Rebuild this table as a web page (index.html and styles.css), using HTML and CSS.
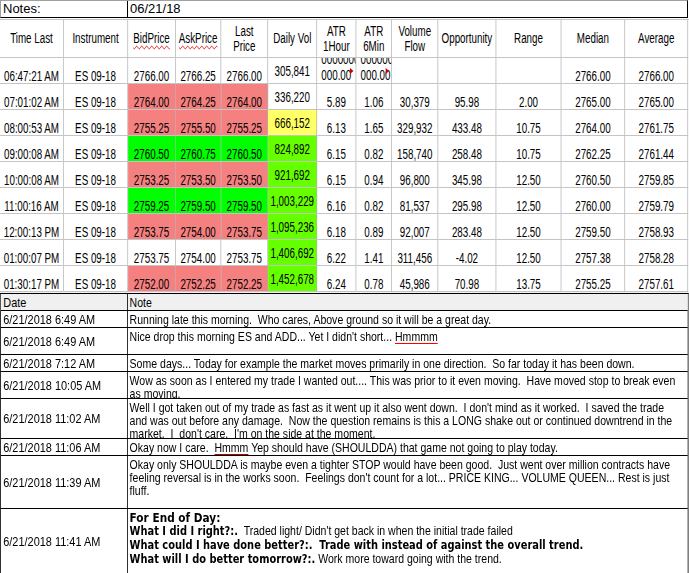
FILE: index.html
```html
<!DOCTYPE html>
<html>
<head>
<meta charset="utf-8">
<link rel="stylesheet" href="styles.css">
</head>
<body>
<div class="notes-bar"><div class="notes-label">Notes:</div><div class="notes-date">06/21/18</div></div>

<div class="grid-scale">
<div class="grid">
<div class="cell head">Time Last</div>
<div class="cell head">Instrument</div>
<div class="cell head"><span class="spell">BidPrice</span></div>
<div class="cell head"><span class="spell">AskPrice</span></div>
<div class="cell head">Last<br>Price</div>
<div class="cell head">Daily Vol</div>
<div class="cell head">ATR<br>1Hour</div>
<div class="cell head">ATR<br>6Min</div>
<div class="cell head">Volume<br>Flow</div>
<div class="cell head">Opportunity</div>
<div class="cell head">Range</div>
<div class="cell head">Median</div>
<div class="cell head">Average</div>

<div class="cell">06:47:21 AM</div>
<div class="cell">ES 09-18</div>
<div class="cell">2766.00</div>
<div class="cell">2766.25</div>
<div class="cell">2766.00</div>
<div class="cell vol">305,841</div>
<div class="cell ovf"><div>0000000</div><div>000.00</div><span class="marker"></span></div>
<div class="cell ovf"><div>0000000</div><div>000.00</div><span class="marker"></span></div>
<div class="cell"></div>
<div class="cell"></div>
<div class="cell"></div>
<div class="cell">2766.00</div>
<div class="cell">2766.00</div>

<div class="cell">07:01:02 AM</div>
<div class="cell">ES 09-18</div>
<div class="cell red">2764.00</div>
<div class="cell red">2764.25</div>
<div class="cell red">2764.00</div>
<div class="cell vol">336,220</div>
<div class="cell">5.89</div>
<div class="cell">1.06</div>
<div class="cell">30,379</div>
<div class="cell">95.98</div>
<div class="cell">2.00</div>
<div class="cell">2765.00</div>
<div class="cell">2765.00</div>

<div class="cell">08:00:53 AM</div>
<div class="cell">ES 09-18</div>
<div class="cell red">2755.25</div>
<div class="cell red">2755.50</div>
<div class="cell red">2755.25</div>
<div class="cell vol yel">666,152</div>
<div class="cell">6.13</div>
<div class="cell">1.65</div>
<div class="cell">329,932</div>
<div class="cell">433.48</div>
<div class="cell">10.75</div>
<div class="cell">2764.00</div>
<div class="cell">2761.75</div>

<div class="cell">09:00:08 AM</div>
<div class="cell">ES 09-18</div>
<div class="cell grn">2760.50</div>
<div class="cell grn">2760.75</div>
<div class="cell grn">2760.50</div>
<div class="cell vol lime">824,892</div>
<div class="cell">6.15</div>
<div class="cell">0.82</div>
<div class="cell">158,740</div>
<div class="cell">258.48</div>
<div class="cell">10.75</div>
<div class="cell">2762.25</div>
<div class="cell">2761.44</div>

<div class="cell">10:00:08 AM</div>
<div class="cell">ES 09-18</div>
<div class="cell red">2753.25</div>
<div class="cell red">2753.50</div>
<div class="cell red">2753.50</div>
<div class="cell vol lime">921,692</div>
<div class="cell">6.15</div>
<div class="cell">0.94</div>
<div class="cell">96,800</div>
<div class="cell">345.98</div>
<div class="cell">12.50</div>
<div class="cell">2760.50</div>
<div class="cell">2759.85</div>

<div class="cell">11:00:16 AM</div>
<div class="cell">ES 09-18</div>
<div class="cell grn">2759.25</div>
<div class="cell grn">2759.50</div>
<div class="cell grn">2759.50</div>
<div class="cell vol lime">1,003,229</div>
<div class="cell">6.16</div>
<div class="cell">0.82</div>
<div class="cell">81,537</div>
<div class="cell">295.98</div>
<div class="cell">12.50</div>
<div class="cell">2760.00</div>
<div class="cell">2759.79</div>

<div class="cell">12:00:13 PM</div>
<div class="cell">ES 09-18</div>
<div class="cell red">2753.75</div>
<div class="cell red">2754.00</div>
<div class="cell red">2753.75</div>
<div class="cell vol lime">1,095,236</div>
<div class="cell">6.18</div>
<div class="cell">0.89</div>
<div class="cell">92,007</div>
<div class="cell">283.48</div>
<div class="cell">12.50</div>
<div class="cell">2759.50</div>
<div class="cell">2758.93</div>

<div class="cell">01:00:07 PM</div>
<div class="cell">ES 09-18</div>
<div class="cell">2753.75</div>
<div class="cell">2754.00</div>
<div class="cell">2753.75</div>
<div class="cell vol lime">1,406,692</div>
<div class="cell">6.22</div>
<div class="cell">1.41</div>
<div class="cell">311,456</div>
<div class="cell">-4.02</div>
<div class="cell">12.50</div>
<div class="cell">2757.38</div>
<div class="cell">2758.28</div>

<div class="cell">01:30:17 PM</div>
<div class="cell">ES 09-18</div>
<div class="cell red">2752.00</div>
<div class="cell red">2752.25</div>
<div class="cell red">2752.25</div>
<div class="cell vol lime">1,452,678</div>
<div class="cell">6.24</div>
<div class="cell">0.78</div>
<div class="cell">45,986</div>
<div class="cell">70.98</div>
<div class="cell">13.75</div>
<div class="cell">2755.25</div>
<div class="cell">2757.61</div>
</div>
</div>

<div class="gap"></div>

<div class="journal-scale">
<div class="journal">
<div class="jrow jhead"><div class="date">Date</div><div class="note">Note</div></div>
<div class="jrow h17"><div class="date">6/21/2018 6:49 AM</div><div class="note">Running late this morning.  Who cares, Above ground so it will be a great day.</div></div>
<div class="jrow h27"><div class="date">6/21/2018 6:49 AM</div><div class="note">Nice drop this morning ES and ADD... Yet I didn't short... <span class="typo">Hmmmm</span></div></div>
<div class="jrow h17"><div class="date">6/21/2018 7:12 AM</div><div class="note">Some days... Today for example the market moves primarily in one direction.  So far today it has been down.</div></div>
<div class="jrow h27"><div class="date">6/21/2018 10:05 AM</div><div class="note">Wow as soon as I entered my trade I wanted out.... This was prior to it even moving.  Have moved stop to break even<br>as moving.</div></div>
<div class="jrow h40"><div class="date">6/21/2018 11:02 AM</div><div class="note">Well I got taken out of my trade as fast as it went up it also went down.  I don't mind as it worked.  I saved the trade<br>and was out before any damage.  Now the question remains is this a LONG shake out or continued downtrend in the<br>market.  I  don't care.  I'm on the side at the moment.</div></div>
<div class="jrow h17"><div class="date">6/21/2018 11:06 AM</div><div class="note">Okay now I care.  <span class="typo dark">Hmmm</span> Yep should have (SHOULDDA) that game not going to play today.</div></div>
<div class="jrow h53"><div class="date">6/21/2018 11:39 AM</div><div class="note">Okay only SHOULDDA is maybe even a tighter STOP would have been good.  Just went over million contracts have<br>feeling reversal is in the works soon.  Feelings don't count for a lot... PRICE KING... VOLUME QUEEN... Rest is just<br>fluff.</div></div>
<div class="jrow h66"><div class="date">6/21/2018 11:41 AM</div><div class="note"><b class="title">For End of Day:</b><br><b class="ask">What I did I right?:.</b>  Traded light/ Didn't get back in when the initial trade failed<br><b class="ask">What could I have done better?:.  Trade with instead of against the overall trend.</b><br><b class="ask">What will I do better tomorrow?:.</b> Work more toward going with the trend.</div></div>
</div>
</div>
</body>
</html>
```

FILE: styles.css
```css
* {
  box-sizing: border-box;
}

html,
body {
  margin: 0;
  padding: 0;
  background: #ffffff;
  overflow: hidden;
}

body {
  width: 689px;
  height: 573px;
  font-family: "Liberation Sans", Arial, sans-serif;
  color: #000000;
}

/* top "Notes:" bar */
.notes-bar {
  display: flex;
  width: 688px;
  height: 18px;
  border: 1px solid #000000;
  border-top-color: #a0a0a0;
  border-left-color: #a0a0a0;
  font-size: 13px;
  line-height: 16px;
}

.notes-label {
  width: 127px;
  padding-left: 2px;
  border-right: 1px solid #000000;
}

.notes-date {
  padding-left: 2px;
}

/* price grid (rendered condensed) */
.grid-scale {
  width: 984px;
  margin-top: 1px;
  transform: scaleX(0.7);
  transform-origin: 0 0;
}

.grid {
  display: grid;
  grid-template-columns: 91px 92px 68px 65px 67px 70px 56px 51px 66px 83px 93px 91px 90px;
  grid-template-rows: 38px;
  grid-auto-rows: 26px;
  border-top: 1px solid #c4c4c4;
  font-size: 14px;
}

.cell {
  display: flex;
  justify-content: center;
  align-items: flex-end;
  border-right: 1px solid #b0b0b0;
  border-bottom: 1px solid #c4c4c4;
  line-height: 14px;
  white-space: nowrap;
  overflow: hidden;
}

.head {
  align-items: center;
  text-align: center;
  line-height: 15px;
}

.vol {
  padding-bottom: 5px;
}

.red {
  background: #f48080;
}

.grn {
  background: #00ff00;
}

.lime {
  background: #66ff00;
}

.yel {
  background: #ffff66;
}

.spell {
  text-decoration: underline wavy #e00000;
  text-decoration-thickness: 1px;
  text-underline-offset: 2px;
}

.ovf {
  position: relative;
  flex-direction: column;
  align-items: flex-start;
  justify-content: flex-end;
  padding-left: 6px;
  line-height: 16px;
}

.marker {
  position: absolute;
  right: 3px;
  top: 10px;
  width: 0;
  height: 0;
  border-left: 5px solid #d00000;
  border-top: 3px solid transparent;
  border-bottom: 3px solid transparent;
}

.gap {
  height: 1px;
  background: #f0f0f0;
}

/* journal notes table */
.journal-scale {
  width: 850px;
  transform: scaleX(0.81);
  transform-origin: 0 0;
}

.journal {
  border: 1px solid #000000;
  border-bottom: none;
  font-size: 13px;
  line-height: 13px;
}

.jrow {
  display: grid;
  grid-template-columns: 157px minmax(0, 1fr);
  border-bottom: 1px solid #000000;
  overflow: hidden;
}

.jhead {
  height: 17px;
  background: #f0f0f0;
}

.date {
  display: flex;
  align-items: center;
  padding-left: 3px;
  border-right: 1px solid #000000;
  white-space: nowrap;
  font-size: 13.5px;
}

.note {
  padding: 2px 0 0 2px;
  white-space: pre;
  overflow: hidden;
}

.jhead .note {
  display: flex;
  align-items: center;
  padding-top: 0;
}

.note b {
  font-weight: bold;
}

.note .title {
  font-family: "DejaVu Sans", "Liberation Sans", sans-serif;
  font-size: 13px;
}

.note .ask {
  font-family: "DejaVu Sans", "Liberation Sans", sans-serif;
  font-size: 12.2px;
}

.typo {
  text-decoration: underline;
  text-decoration-color: #ff0000;
  text-underline-offset: 2px;
}

.typo.dark {
  text-decoration-color: #b00000;
}

.h17 { height: 17px; }
.h27 { height: 27px; }
.h40 { height: 40px; }
.h53 { height: 53px; }
.h66 { height: 66px; }
```
